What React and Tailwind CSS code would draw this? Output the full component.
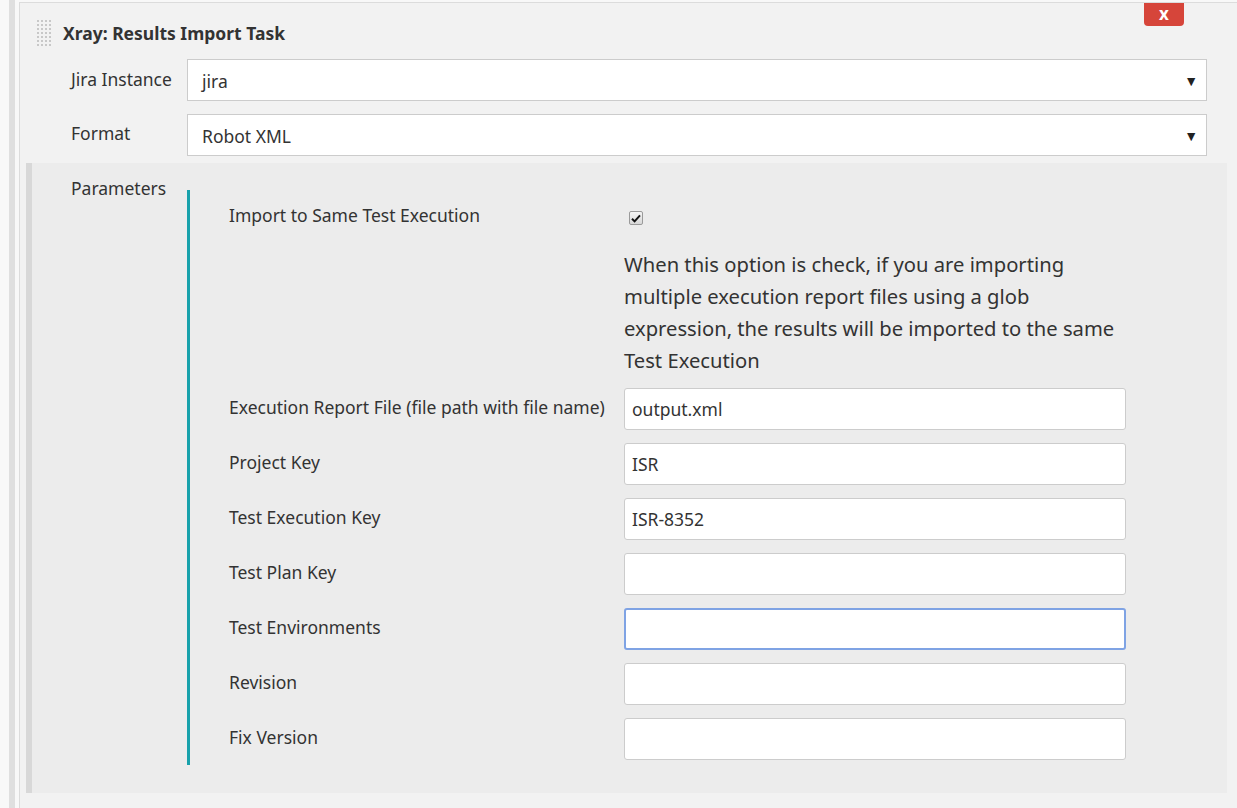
const font = { fontFamily: '"Noto Sans", "Open Sans", sans-serif' };

const Dragger = () => (
    <div className="grid grid-cols-4 gap-[2px] w-[14px]">
        {Array.from({ length: 28 }).map((_, i) => (
            <span key={i} className="w-[2px] h-[2px] bg-[#c8c8c8]" />
        ))}
    </div>
);

const Select = ({ value }) => (
    <div className="flex-1 h-[42px] bg-white border border-[#cccccc] flex items-center justify-between pl-[14px] pr-[8px] text-[17.5px] text-[#333]">
        <span className="mt-[2px]">{value}</span>
        <span className="text-[14px] text-[#222]">▼</span>
    </div>
);

const Field = ({ label, value, focused }) => (
    <div className="flex items-center h-[42px]">
        <div className="w-[395px] text-[17.5px] text-[#333] -mt-[3px]">{label}</div>
        <div
            className={
                focused
                    ? 'w-[502px] h-[42px] bg-white rounded-[3px] border-2 border-[#7fa3e4] flex items-center pl-[7px] text-[17.5px] text-[#333]'
                    : 'w-[502px] h-[42px] bg-white rounded-[3px] border border-[#cccccc] flex items-center pl-[7px] text-[17.5px] text-[#333]'
            }
        >
            {value}
        </div>
    </div>
);

const Checkbox = () => (
    <div className="w-[14px] h-[14px] rounded-[2px] border border-[#9a9a9a] bg-gradient-to-b from-[#f4f4f4] to-[#d8d8d8] flex items-center justify-center">
        <svg width="10" height="9" viewBox="0 0 10 9">
            <path d="M1 4.8 L3.6 7.4 L9 1.4" fill="none" stroke="#111" strokeWidth="2" />
        </svg>
    </div>
);

export default function App() {
    const fields = [
        { label: 'Execution Report File (file path with file name)', value: 'output.xml' },
        { label: 'Project Key', value: 'ISR' },
        { label: 'Test Execution Key', value: 'ISR-8352' },
        { label: 'Test Plan Key', value: '' },
        { label: 'Test Environments', value: '', focused: true },
        { label: 'Revision', value: '' },
        { label: 'Fix Version', value: '' },
    ];

    return (
        <div className="flex w-[1237px] h-[808px] bg-[#f8f8f8] overflow-hidden" style={font}>
            <div className="w-[9px]" />
            <div className="w-[6px] bg-[#dfdfdf]" />
            <div className="w-[4px]" />
            <div className="flex-1 mt-[2px] border-l border-t border-[#dcdcdc] bg-[#f2f2f2] relative">
                {/* delete button */}
                <div className="absolute top-0 right-[53px] w-[40px] h-[23px] bg-[#d6453a] rounded-b-[4px] flex items-center justify-center text-white font-bold text-[17px] leading-none pb-[2px]">
                    x
                </div>

                {/* header */}
                <div className="h-[56px] pt-[4px] flex items-center pl-[17px]">
                    <Dragger />
                    <span className="ml-[12px] font-bold text-[17.5px] text-[#333]">Xray: Results Import Task</span>
                </div>

                {/* selects */}
                <div className="flex items-center pl-[51px] pr-[30px]">
                    <div className="w-[116px] text-[17.5px] text-[#333] -mt-[2px]">Jira Instance</div>
                    <Select value="jira" />
                </div>
                <div className="flex items-center pl-[51px] pr-[30px] mt-[13px]">
                    <div className="w-[116px] text-[17.5px] text-[#333] -mt-[4px]">Format</div>
                    <Select value="Robot XML" />
                </div>

                {/* parameters */}
                <div className="mt-[7px] ml-[6px] mr-[10px] h-[630px] bg-[#ececec] border-l-[6px] border-[#d8d8d8] flex">
                    <div className="w-[155px] pl-[39px] pt-[13px] text-[17.5px] text-[#333] leading-[24px]">Parameters</div>
                    <div className="mt-[27px] self-start border-l-[3px] border-[#18a1ab] pl-[39px] pb-[5px]">
                        <div className="flex pt-[13px] h-[38px]">
                            <div className="w-[395px] text-[17.5px] leading-[24px] text-[#333]">Import to Same Test Execution</div>
                            <div className="ml-[5px] mt-[8px]">
                                <Checkbox />
                            </div>
                        </div>
                        <p className="ml-[395px] mt-[20px] text-[20.2px] leading-[32px] text-[#333]">
                            When this option is check, if you are importing
                            <br />
                            multiple execution report files using a glob
                            <br />
                            expression, the results will be imported to the same
                            <br />
                            Test Execution
                        </p>
                        <div className="mt-[12px] flex flex-col gap-[13px]">
                            {fields.map((f) => (
                                <Field key={f.label} {...f} />
                            ))}
                        </div>
                    </div>
                </div>
            </div>
        </div>
    );
}
